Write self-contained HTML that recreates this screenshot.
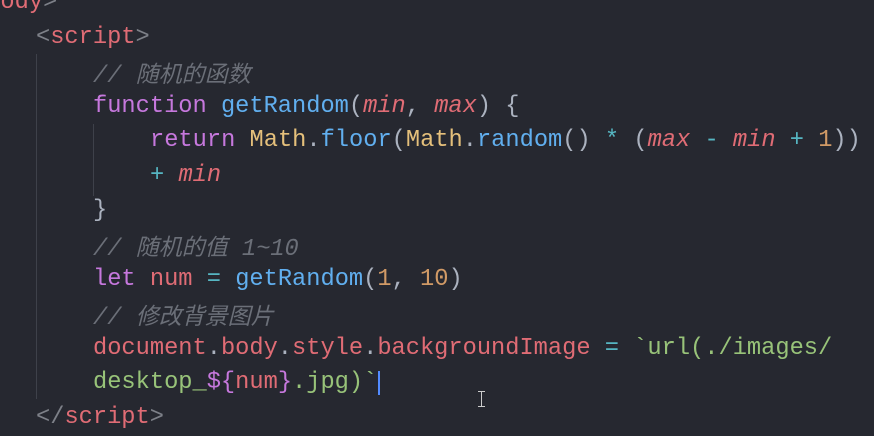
<!DOCTYPE html>
<html><head><meta charset="utf-8"><style>
html,body{margin:0;padding:0;width:874px;height:436px;overflow:hidden;background:#262830;}
.l{position:absolute;white-space:pre;font-family:"Liberation Mono","Noto Sans CJK SC",monospace;font-size:23.7px;line-height:34.6px;height:34.6px;color:#abb2bf;}
.t{color:#e06c75}.p{color:#7d8088}.k{color:#c678dd}.f{color:#61afef}.i{color:#e06c75;font-style:italic}
.y{color:#e5c07b}.o{color:#d19a66}.c{color:#56b6c2}.g{color:#98c379}.cm{color:#6b6f78;font-style:italic}
.cj{font-family:"Noto Sans CJK SC",sans-serif;font-size:23px;font-style:italic;}
.guide{position:absolute;width:1px;background:#3e414a;}
</style></head><body>
<div class="guide" style="left:36px;top:54px;height:345px"></div>
<div class="guide" style="left:93px;top:124px;height:72px"></div>
<div class="l" style="left:-28px;top:-14px"><span class="p">&lt;</span><span class="t">body</span><span class="p">&gt;</span></div>
<div class="l" style="left:36px;top:21px"><span class="p">&lt;</span><span class="t">script</span><span class="p">&gt;</span></div>
<div class="l" style="left:93px;top:55px"><span class="cm">// <span class="cj">随机的函数</span></span></div>
<div class="l" style="left:93px;top:90px"><span class="k">function</span> <span class="f">getRandom</span>(<span class="i">min</span>, <span class="i">max</span>) {</div>
<div class="l" style="left:150px;top:124px"><span class="k">return</span> <span class="y">Math</span>.<span class="f">floor</span>(<span class="y">Math</span>.<span class="f">random</span>() <span class="c">*</span> (<span class="i">max</span> <span class="c">-</span> <span class="i">min</span> <span class="c">+</span> <span class="o">1</span>))</div>
<div class="l" style="left:150px;top:159px"><span class="c">+</span> <span class="i">min</span></div>
<div class="l" style="left:93px;top:194px">}</div>
<div class="l" style="left:93px;top:228px"><span class="cm">// <span class="cj">随机的值</span> 1~10</span></div>
<div class="l" style="left:93px;top:263px"><span class="k">let</span> <span class="t">num</span> <span class="c">=</span> <span class="f">getRandom</span>(<span class="o">1</span>, <span class="o">10</span>)</div>
<div class="l" style="left:93px;top:297px"><span class="cm">// <span class="cj">修改背景图片</span></span></div>
<div class="l" style="left:93px;top:332px"><span class="t">document</span>.<span class="t">body</span>.<span class="t">style</span>.<span class="t">backgroundImage</span> <span class="c">=</span> <span class="g">`url(./images/</span></div>
<div class="l" style="left:93px;top:366px"><span class="g">desktop_</span><span class="k">${</span><span class="t">num</span><span class="k">}</span><span class="g">.jpg)`</span></div>
<div style="position:absolute;left:378px;top:371px;width:2px;height:24px;background:#528bff"></div>
<div class="l" style="left:36px;top:401px"><span class="p">&lt;/</span><span class="t">script</span><span class="p">&gt;</span></div>
<div style="position:absolute;left:481px;top:391px;width:1px;height:16px;background:#ccc"></div>
<div style="position:absolute;left:478px;top:391px;width:7px;height:1px;background:#ccc"></div>
<div style="position:absolute;left:478px;top:406px;width:7px;height:1px;background:#ccc"></div>
</body></html>
